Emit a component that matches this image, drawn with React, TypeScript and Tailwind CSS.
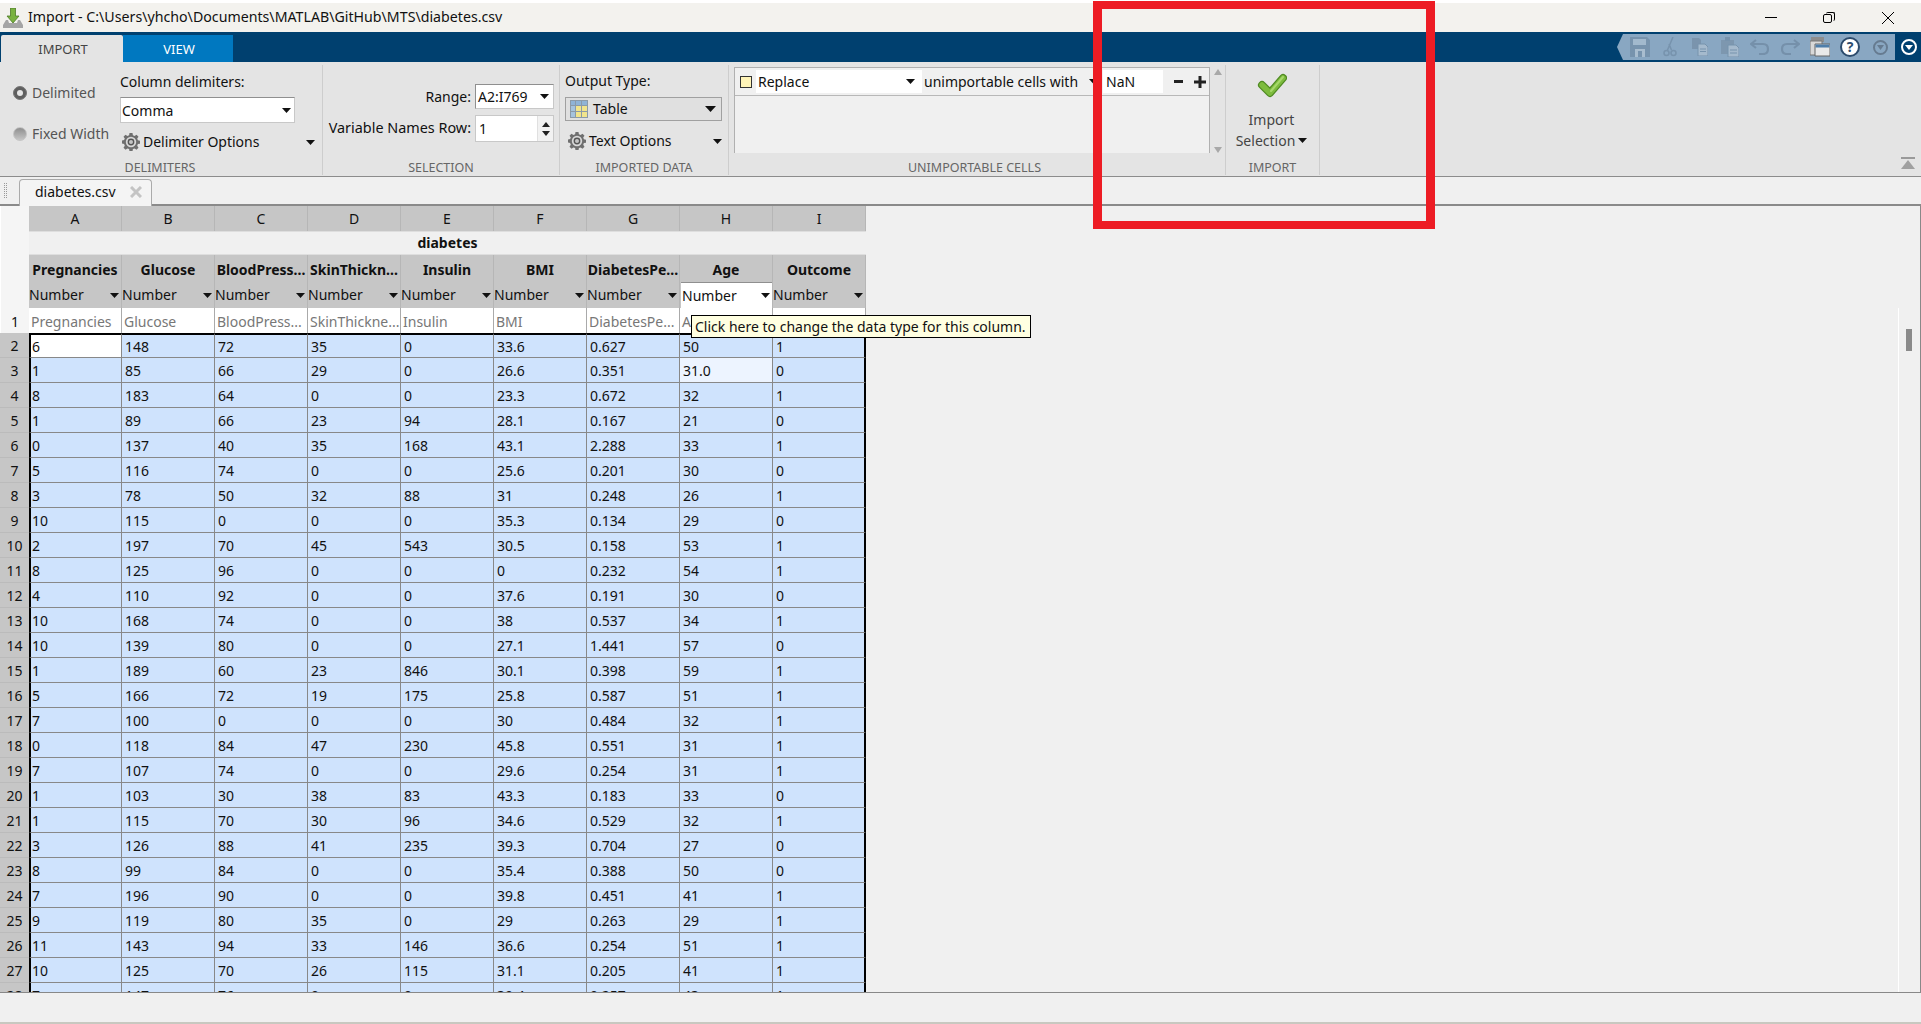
import type { ReactNode } from "react";

const COLS = ["A", "B", "C", "D", "E", "F", "G", "H", "I"];
const NAMES = ["Pregnancies", "Glucose", "BloodPress...", "SkinThickn...", "Insulin", "BMI", "DiabetesPe...", "Age", "Outcome"];
const ROW1 = ["Pregnancies", "Glucose", "BloodPress...", "SkinThickne...", "Insulin", "BMI", "DiabetesPe...", "A", ""];

const DATA = [
  "6 148 72 35 0 33.6 0.627 50 1",
  "1 85 66 29 0 26.6 0.351 31.0 0",
  "8 183 64 0 0 23.3 0.672 32 1",
  "1 89 66 23 94 28.1 0.167 21 0",
  "0 137 40 35 168 43.1 2.288 33 1",
  "5 116 74 0 0 25.6 0.201 30 0",
  "3 78 50 32 88 31 0.248 26 1",
  "10 115 0 0 0 35.3 0.134 29 0",
  "2 197 70 45 543 30.5 0.158 53 1",
  "8 125 96 0 0 0 0.232 54 1",
  "4 110 92 0 0 37.6 0.191 30 0",
  "10 168 74 0 0 38 0.537 34 1",
  "10 139 80 0 0 27.1 1.441 57 0",
  "1 189 60 23 846 30.1 0.398 59 1",
  "5 166 72 19 175 25.8 0.587 51 1",
  "7 100 0 0 0 30 0.484 32 1",
  "0 118 84 47 230 45.8 0.551 31 1",
  "7 107 74 0 0 29.6 0.254 31 1",
  "1 103 30 38 83 43.3 0.183 33 0",
  "1 115 70 30 96 34.6 0.529 32 1",
  "3 126 88 41 235 39.3 0.704 27 0",
  "8 99 84 0 0 35.4 0.388 50 0",
  "7 196 90 0 0 39.8 0.451 41 1",
  "9 119 80 35 0 29 0.263 29 1",
  "11 143 94 33 146 36.6 0.254 51 1",
  "10 125 70 26 115 31.1 0.205 41 1",
  "7 147 76 0 0 39.4 0.257 43 1",
];

function Caret({ className = "" }: { className?: string }) {
  return (
    <svg width="9" height="5" viewBox="0 0 9 5" className={className}>
      <path d="M0 0h9L4.500 5z" fill="#111" />
    </svg>
  );
}

function Gear() {
  return (
    <svg width="18" height="18" viewBox="0 0 18 18">
      <path
        d="M7.500 0h3l.4 2.300 1.700.7L14.500 1.700l2 2-1.300 1.900.7 1.700 2.100.4v3l-2.100.4-.7 1.700 1.300 1.900-2 2-1.900-1.300-1.700.7-.4 2.300h-3l-.4-2.300-1.700-.7-1.900 1.300-2-2 1.300-1.900-.7-1.700L0 10.500v-3l2.100-.4.700-1.700L1.500 3.700l2-2L5.400 3l1.700-.7z"
        fill="#6f6f6f"
      />
      <circle cx="9" cy="9" r="5.200" fill="#d8d8d8" />
      <circle cx="9" cy="9" r="3.400" fill="#555" />
      <circle cx="9" cy="9" r="2" fill="#c4c4c4" />
    </svg>
  );
}

function Radio({ on }: { on?: boolean }) {
  if (!on) {
    return <span className="h-[14px] w-[14px] rounded-full border border-[#c4c4c4] bg-gradient-to-b from-[#8f8f8f] to-[#c6c6c6]" />;
  }
  return (
    <span className="flex h-[14px] w-[14px] items-center justify-center rounded-full border border-[#777] bg-[#5f5f5f]">
      <span className="h-[6px] w-[6px] rounded-full bg-[#e6e6e6]" />
    </span>
  );
}

function Group({ width, label, labelClass = "", children }: { width: string; label: string; labelClass?: string; children: ReactNode }) {
  return (
    <div className={`my-[3px] flex h-[110px] shrink-0 flex-col ${width} border-r border-[#cdcdcd]`}>
      <div className="h-[95px]">{children}</div>
      <div className={`flex h-[15px] items-center justify-center pt-[1px] text-[12.500px] text-[#666] ${labelClass}`}>{label}</div>
    </div>
  );
}

function ToolIcon({ children }: { children: ReactNode }) {
  return <span className="flex w-[30px] justify-center">{children}</span>;
}

function QuickToolbar() {
  return (
    <div className="mb-[2px] ml-auto mr-[26px] flex h-[26px] items-center bg-[#89a7c2] pl-[8px] [clip-path:polygon(6px_0,100%_0,100%_100%,6px_100%,0_50%)]">
      <ToolIcon>
        <svg width="20" height="20" viewBox="0 0 20 20">
          <path d="M0 0h17l3 3v17H0z" fill="#7793ad" />
          <path d="M3 2h13v6H3z" fill="#a2b9cd" />
          <path d="M5 12h10v8H5z" fill="#a9bdcf" />
          <path d="M8 14h4v6H8z" fill="#7793ad" />
        </svg>
      </ToolIcon>
      <ToolIcon>
        <svg width="14" height="20" viewBox="0 0 14 20" fill="none" stroke="#7793ad" strokeWidth="1.500">
          <path d="M10 0 4.500 13M6 7l2.500 6" />
          <circle cx="3.500" cy="16" r="2.500" />
          <circle cx="10.500" cy="16" r="2.500" />
        </svg>
      </ToolIcon>
      <ToolIcon>
        <svg width="16" height="18" viewBox="0 0 16 18">
          <path d="M0 0h7l2 2v9H0z" fill="#7a94ad" />
          <path d="M6 6h7l3 3v9H6z" fill="#a5bacd" stroke="#7793ad" />
          <path d="M8 11h6M8 13.500h6" stroke="#7793ad" />
        </svg>
      </ToolIcon>
      <ToolIcon>
        <svg width="18" height="20" viewBox="0 0 18 20">
          <path d="M0 3h13v14H0z" fill="#7d97af" />
          <path d="M4 0h5v4H4z" fill="#7793ad" />
          <path d="M7 8h8l3 3v9H7z" fill="#a5bacd" stroke="#7793ad" />
          <path d="M9 13h7M9 16h7" stroke="#7793ad" />
        </svg>
      </ToolIcon>
      <ToolIcon>
        <svg width="20" height="16" viewBox="0 0 20 16" fill="none">
          <path d="M6 1 1 5l5 4M2 5h11c3 0 5 2 5 5s-2 5-5 5H9" stroke="#7590aa" strokeWidth="2.200" />
        </svg>
      </ToolIcon>
      <ToolIcon>
        <svg width="20" height="16" viewBox="0 0 20 16" fill="none">
          <path d="m14 1 5 4-5 4M18 5H7c-3 0-5 2-5 5s2 5 5 5h4" stroke="#7590aa" strokeWidth="2.200" />
        </svg>
      </ToolIcon>
      <ToolIcon>
        <svg width="20" height="20" viewBox="0 0 20 20">
          <path d="M1 0h13v5H1z" fill="#8d8d8d" />
          <path d="M0 4h12v14H0z" fill="#d8d8d8" stroke="#777" />
          <path d="M5 7h15v12H5z" fill="#e9e9e9" stroke="#666" />
          <path d="M5.500 7.500h14v3h-14z" fill="#4f7eaa" />
        </svg>
      </ToolIcon>
      <ToolIcon>
        <span className="flex h-[20px] w-[20px] items-center justify-center rounded-full border-2 border-[#2d4c6d] bg-white text-[14px] font-bold leading-none text-[#2d4c6d]">?</span>
      </ToolIcon>
      <ToolIcon>
        <span className="flex h-[15px] w-[15px] items-center justify-center rounded-full border-2 border-[#667b90]">
          <svg width="7" height="5" viewBox="0 0 7 5"><path d="M0 0h7L3.500 5z" fill="#667b90" /></svg>
        </span>
      </ToolIcon>
    </div>
  );
}

function Ribbon() {
  return (
    <div className="flex h-[115px] shrink-0 items-start border-b border-[#8c8c8c] bg-[#e4e4e4]">
      <Group width="w-[323px]" label="DELIMITERS" labelClass="pr-[2px]">
        <div className="flex pl-[13px]">
          <div className="flex w-[107px] flex-col gap-[25px] pt-[20px] text-[#555]">
            <div className="flex h-[16px] items-center gap-[5px]"><Radio on />Delimited</div>
            <div className="flex h-[16px] items-center gap-[5px]"><Radio />Fixed Width</div>
          </div>
          <div className="w-[198px] pt-[8px]">
            <div className="h-[18px] leading-[18px]">Column delimiters:</div>
            <div className="mt-[6px] flex h-[26px] w-[175px] items-center justify-between border border-[#c8c8c8] border-t-[#8f8f8f] bg-white pl-[1px] pr-[3px] pt-[1px]">
              Comma
              <Caret />
            </div>
            <div className="mt-[9px] flex h-[20px] items-center pl-[2px]">
              <Gear />
              <span className="ml-[3px]">Delimiter Options</span>
              <Caret className="ml-auto mr-[3px]" />
            </div>
          </div>
        </div>
      </Group>
      <Group width="w-[237px]" label="SELECTION">
        <div className="flex flex-col items-end pr-[5px] pt-[19px]">
          <div className="flex items-center gap-[4px]">
            Range:
            <div className="flex h-[25px] w-[79px] items-center justify-between border border-[#c8c8c8] border-t-[#8f8f8f] border-l-[#8f8f8f] bg-white pl-[2px] pr-[4px]">
              A2:I769
              <Caret />
            </div>
          </div>
          <div className="mt-[6px] flex items-center gap-[4px]">
            <span className="text-[14.400px]">Variable Names Row:</span>
            <div className="flex h-[27px] w-[79px] items-center justify-between border border-[#c8c8c8] bg-white pl-[3px]">
              1
              <div className="flex h-full w-[16px] flex-col items-center justify-center gap-[4px] border-l border-[#e0e0e0] bg-[#f2f2f2]">
                <svg width="8" height="5" viewBox="0 0 8 5"><path d="M0 5h8L4 0z" fill="#222" /></svg>
                <svg width="8" height="5" viewBox="0 0 8 5"><path d="M0 0h8L4 5z" fill="#222" /></svg>
              </div>
            </div>
          </div>
        </div>
      </Group>
      <Group width="w-[169px]" label="IMPORTED DATA">
        <div className="pl-[5px] pt-[7px]">
          <div className="h-[18px] leading-[18px]">Output Type:</div>
          <div className="mt-[7px] flex h-[24px] w-[157px] items-center border border-[#a0a0a0] bg-[#e0e0e0] pl-[4px] pr-[5px]">
            <svg width="18" height="18" viewBox="0 0 18 18" className="mr-[5px]">
              <path d="M0 0h18v18H0z" fill="#f1e48c" />
              <path d="M0 0h18v5H0z" fill="#8fb3d6" />
              <path d="M0 5h5v13H0z" fill="#a5c3de" />
              <path d="M.500 0v18M5.500 0v18M11.500 0v18M17.500 0v18M0 .500h18M0 5.500h18M0 11.500h18M0 17.500h18" stroke="#8b9aa8" fill="none" />
            </svg>
            Table
            <svg width="11" height="6" viewBox="0 0 11 6" className="ml-auto"><path d="M0 0h11L5.500 6z" fill="#111" /></svg>
          </div>
          <div className="mt-[10px] flex h-[20px] items-center pl-[3px]">
            <Gear />
            <span className="ml-[3px]">Text Options</span>
            <Caret className="ml-auto mr-[6px]" />
          </div>
        </div>
      </Group>
      <Group width="w-[497px]" label="UNIMPORTABLE CELLS" labelClass="pr-[5px]">
        <div className="flex pl-[5px] pt-[2px]">
          <div className="h-[86px] w-[476px] border-x border-t border-[#b0b0b0] bg-[#f0f0f0]">
            <div className="flex h-[28px] items-start border-b border-[#b8b8b8] pl-[5px] pt-[2px]">
              <span className="mr-[4px] mt-[6px] h-[12px] w-[12px] border border-[#333] bg-[#fff4b8]" />
              <div className="flex h-[23px] w-[166px] items-center justify-between bg-white pl-[2px] pr-[7px]">
                Replace
                <Caret />
              </div>
              <div className="ml-[1px] flex h-[23px] w-[180px] items-center justify-between pl-[1px] pr-[5px]">
                unimportable cells with
                <Caret />
              </div>
              <div className="flex h-[23px] w-[60px] items-center bg-white pl-[3px]">NaN</div>
              <span className="ml-[9px] flex h-[23px] w-[12px] items-center justify-center">
                <span className="h-[3px] w-[9px] bg-[#222]" />
              </span>
              <span className="ml-[10px] flex h-[23px] w-[12px] items-center justify-center">
                <svg width="12" height="12" viewBox="0 0 12 12"><path d="M4.500 0h3v4.500H12v3H7.500V12h-3V7.500H0v-3h4.500z" fill="#222" /></svg>
              </span>
            </div>
          </div>
          <div className="flex h-[86px] w-[14px] flex-col items-center justify-between pl-[1px] pt-[2px]">
            <svg width="8" height="6" viewBox="0 0 8 6"><path d="M0 6h8L4 0z" fill="#a8a8a8" /></svg>
            <svg width="8" height="6" viewBox="0 0 8 6"><path d="M0 0h8L4 6z" fill="#a8a8a8" /></svg>
          </div>
        </div>
      </Group>
      <Group width="w-[94px]" label="IMPORT">
        <div className="flex flex-col items-center pr-[2px] pt-[8px] text-[#444]">
          <svg width="30" height="26" viewBox="0 0 30 26" fill="none">
            <path d="M5 12l8 8L26 5" stroke="#4f8a22" strokeWidth="8" strokeLinejoin="round" strokeLinecap="round" />
            <path d="M5 12l8 8L26 5" stroke="#7dbb3e" strokeWidth="5.500" strokeLinejoin="round" strokeLinecap="round" />
            <path d="M14 18 26 4" stroke="#a6d86a" strokeWidth="2" strokeLinecap="round" />
          </svg>
          <div className="mt-[10px] h-[21px] leading-[21px]">Import</div>
          <div className="flex h-[21px] items-center leading-[21px]">Selection<Caret className="ml-[3px]" /></div>
        </div>
      </Group>
      <div className="ml-auto mr-[6px] mt-[95px] flex w-[14px] flex-col items-center">
        <span className="h-[2px] w-[14px] bg-[#9a9a9a]" />
        <svg width="14" height="9" viewBox="0 0 14 9" className="mt-[1px]"><path d="M0 9h14L7 0z" fill="#a0a0a0" /></svg>
      </div>
    </div>
  );
}

function HeadCell({ children, className = "" }: { children?: ReactNode; className?: string }) {
  return <div className={`h-full w-[93px] shrink-0 border-r border-[#b6b6b6] ${className}`}>{children}</div>;
}

function Sheet() {
  return (
    <div className="w-[866px] shrink-0 overflow-hidden">
      <div className="flex h-[25px]">
        <div className="w-[29px] shrink-0 border-l border-white bg-[#f5f5f5]" />
        {COLS.map((c) => (
          <HeadCell key={c} className="flex items-center justify-center bg-[#c6c6c6]">{c}</HeadCell>
        ))}
      </div>
      <div className="flex h-[24px]">
        <div className="w-[29px] shrink-0 border-l border-white bg-[#f5f5f5]" />
        <div className="flex w-[837px] items-center justify-center border-y border-[#dedede] bg-[#f0f0f0] font-bold">diabetes</div>
      </div>
      <div className="flex h-[53px]">
        <div className="w-[29px] shrink-0 border-l border-white bg-[#f5f5f5]" />
        {NAMES.map((n, i) => (
          <HeadCell key={n} className="flex flex-col bg-[#c6c6c6]">
            <div className="flex h-[27px] items-center justify-center whitespace-nowrap pt-[3px] font-bold">{n}</div>
            <div className={`flex flex-1 items-center justify-between pl-[0px] pr-[2px] ${i === 7 ? "ml-[1px] border-t border-[#8f8f8f] bg-white pl-[1px]" : ""}`}>
              Number
              <Caret />
            </div>
          </HeadCell>
        ))}
      </div>
      <div className="flex h-[25px]">
        <div className="flex w-[29px] shrink-0 items-center justify-center border-l border-white bg-[#f5f5f5] pt-[2px]">1</div>
        {ROW1.map((n, i) => (
          <div key={i} className="flex h-full w-[93px] shrink-0 items-center overflow-hidden whitespace-nowrap border-r border-[#aaa] bg-white pl-[2px] pt-[2px] text-[#777]">{n}</div>
        ))}
      </div>
      {DATA.map((row, r) => (
        <div key={r} className="flex h-[25px]">
          <div className="flex w-[29px] shrink-0 items-center justify-center border-b border-[#bbb] bg-[#c6c6c6] pt-[2px]">{r + 2}</div>
          {row.split(" ").map((v, c) => {
            const bg = r === 0 && c === 0 ? "bg-white" : r === 1 && c === 7 ? "bg-[#edf4ff]" : "bg-[#cfe3fd]";
            return (
              <div
                key={c}
                className={`flex h-full w-[93px] shrink-0 items-center border-b border-[#888] pt-[2px] ${bg} ${
                  r === 0 ? "border-t-2 border-t-black" : ""
                } ${c === 0 ? "border-l-2 border-l-black pl-[1px]" : "pl-[3px]"} ${c === 8 ? "border-r-2 border-r-black" : "border-r border-r-[#888]"}`}
              >
                {v}
              </div>
            );
          })}
        </div>
      ))}
    </div>
  );
}

export default function App() {
  return (
    <div className="relative flex h-screen w-full flex-col overflow-hidden bg-[#f0f0f0] font-['Noto_Sans',sans-serif] text-[14px] leading-none text-[#111]">
      <div className="flex h-[32px] shrink-0 items-center border-t-[3px] border-white bg-[#f3f2ee] pl-[3px]">
        <svg width="20" height="20" viewBox="0 0 20 20" className="mr-[5px]">
          <path d="M7.500 0h5v8h3.500L10 15 4 8h3.500z" fill="#79b23f" stroke="#4d7a26" strokeWidth=".8" />
          <path d="M3 12h2l1 3h8l1-3h2l3 5v3H0v-3z" fill="#a5a5a5" />
        </svg>
        <span className="text-[14.200px]">Import - C:\Users\yhcho\Documents\MATLAB\GitHub\MTS\diabetes.csv</span>
        <div className="ml-auto flex items-center">
          <span className="h-[1px] w-[12px] bg-black" />
          <span className="relative ml-[46px] h-[11px] w-[12px]">
            <span className="absolute bottom-0 left-0 h-[9px] w-[9px] rounded-[2px] border border-black" />
            <span className="absolute right-0 top-0 h-[9px] w-[9px] rounded-[2px] border-r border-t border-black" />
          </span>
          <svg width="12" height="12" viewBox="0 0 12 12" className="ml-[47px] mr-[27px]" fill="none" stroke="#000"><path d="m0 0 12 12M12 0 0 12" /></svg>
        </div>
      </div>

      <div className="relative flex h-[30px] shrink-0 items-end bg-[#00406f] pl-[1px]">
        <div className="flex h-[27px] w-[122px] items-center justify-center rounded-t-[2px] bg-[#e4e4e4] pl-[2px] pt-[2px] text-[13px] text-[#444]">IMPORT</div>
        <div className="flex h-[27px] w-[110px] items-center justify-center bg-[#0078c0] pl-[2px] pt-[2px] text-[13px] text-white">VIEW</div>
        <QuickToolbar />
        <span className="absolute right-[4px] top-[7px] flex h-[16px] w-[16px] items-center justify-center rounded-full border-2 border-white">
          <svg width="8" height="5" viewBox="0 0 8 5"><path d="M0 0h8L4 5z" fill="#fff" /></svg>
        </span>
      </div>

      <Ribbon />

      <div className="flex h-[29px] shrink-0 items-end border-b-2 border-[#8a8a8a] bg-[#f0f0f0]">
        <span className="mb-[6px] ml-[4px] h-[15px] w-[3px] border-x border-dotted border-[#999]" />
        <div className="mb-[-2px] ml-[12px] flex h-[27px] w-[133px] items-center rounded-t-[4px] border-x border-t border-[#aaa] bg-[#f4f4f4] pb-[2px] pl-[15px]">
          diabetes.csv
          <svg width="12" height="12" viewBox="0 0 12 12" className="ml-[14px]" fill="none" stroke="#c4c4c4" strokeWidth="3"><path d="m1 1 10 10M11 1 1 11" /></svg>
        </div>
      </div>

      <div className="flex h-[786px] shrink-0 border-r border-[#888]">
        <Sheet />
        <div className="flex-1" />
        <div className="mt-[102px] w-[22px] border-l border-white">
          <div className="ml-[7px] mt-[21px] h-[22px] w-[6px] bg-[#8a8a8a]" />
        </div>
      </div>

      <div className="flex-1 border-b-2 border-t border-b-[#c8c8c0] border-t-[#888] bg-[#f0f0f0]" />

      <div className="absolute left-[691px] top-[315px] flex h-[23px] w-[340px] items-center whitespace-nowrap border border-black bg-[#ffffe1] pl-[3px]">
        Click here to change the data type for this column.
      </div>
      <div className="absolute left-[1093px] top-[1px] h-[228px] w-[342px] border-x-[9px] border-y-[8px] border-[#ed1c24]" />
    </div>
  );
}
